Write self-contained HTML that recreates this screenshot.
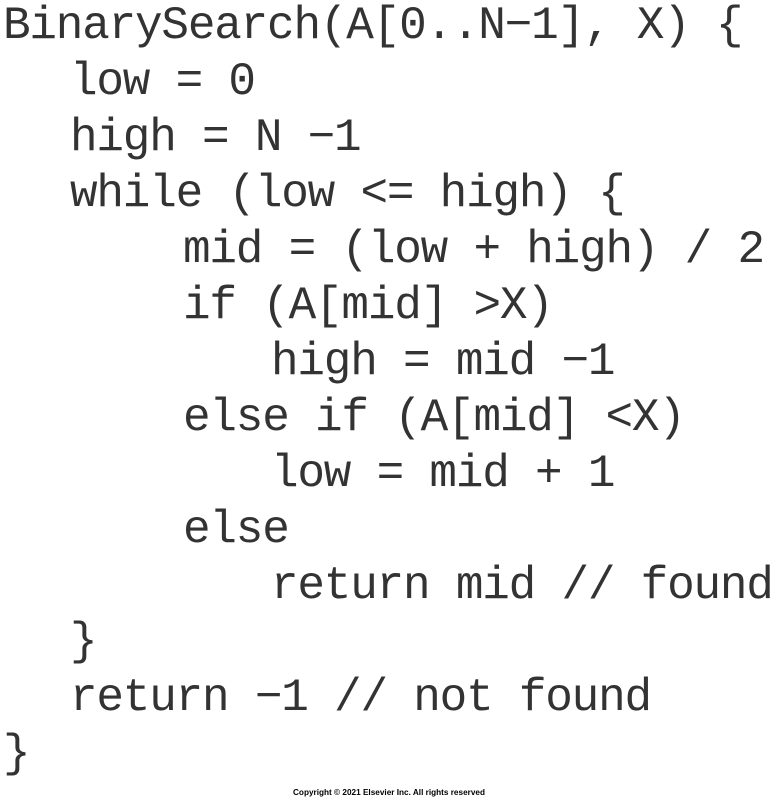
<!DOCTYPE html>
<html><head><meta charset="utf-8"><style>
html,body{margin:0;padding:0;background:#fff;width:778px;height:800px;overflow:hidden}
</style></head><body>
<svg width="778" height="800" xmlns="http://www.w3.org/2000/svg" style="display:block">
<g font-family="Liberation Mono, monospace" font-size="46" fill="#333" letter-spacing="-1.2" xml:space="preserve">
<text x="3" y="38">BinarySearch(A[0..N−1], X) {</text>
<text x="70" y="94">low = 0</text>
<text x="70" y="150">high = N −1</text>
<text x="70" y="206">while (low &lt;= high) {</text>
<text x="183" y="262">mid = (low + high) / 2</text>
<text x="183" y="318">if (A[mid] &gt;X)</text>
<text x="271" y="374">high = mid −1</text>
<text x="183" y="430">else if (A[mid] &lt;X)</text>
<text x="271" y="486">low = mid + 1</text>
<text x="183" y="542">else</text>
<text x="271" y="598">return mid // found</text>
<text x="70" y="654">}</text>
<text x="70" y="710">return −1 // not found</text>
<text x="3" y="766">}</text>
</g>
<text x="389" y="795" font-family="Liberation Sans, sans-serif" font-size="8.5" font-weight="bold" text-anchor="middle" fill="#000" textLength="192" lengthAdjust="spacingAndGlyphs">Copyright © 2021 Elsevier Inc. All rights reserved</text>
</svg>
</body></html>
